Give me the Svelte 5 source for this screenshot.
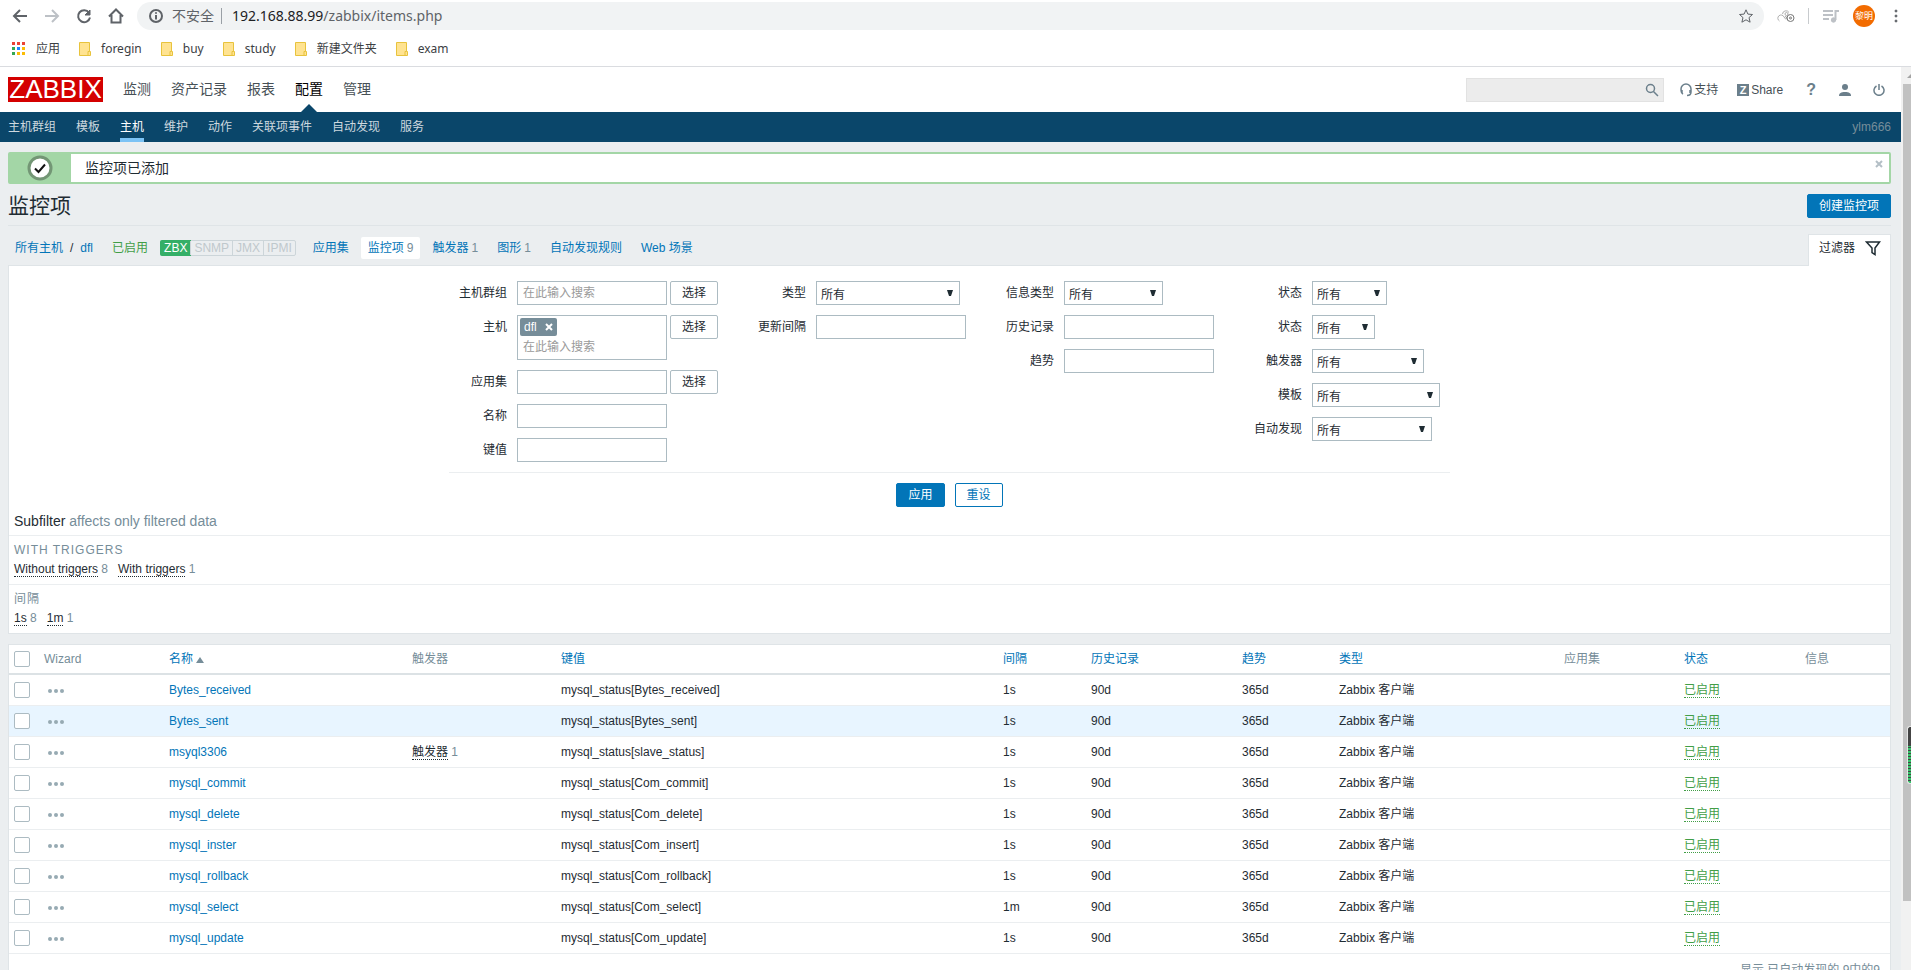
<script lang="ts">
  type Field = {
    id: string;
    label: string;
    kind: 'select' | 'text' | 'search' | 'picker' | 'chips';
    width?: number;
  };

  type Item = { name: string; key: string; interval: string; triggers?: number };

  const bookmarks = ['foregin', 'buy', 'study', '新建文件夹', 'exam'];
  const mainMenu = ['监测', '资产记录', '报表', '配置', '管理'];
  const subMenu = ['主机群组', '模板', '主机', '维护', '动作', '关联项事件', '自动发现', '服务'];
  const interfaces = ['ZBX', 'SNMP', 'JMX', 'IPMI'];

  const tabs = [
    { label: '应用集' },
    { label: '监控项', count: 9, selected: true },
    { label: '触发器', count: 1 },
    { label: '图形', count: 1 },
    { label: '自动发现规则' },
    { label: 'Web 场景' }
  ];

  const filterColumns: Field[][] = [
    [
      { id: 'groups', label: '主机群组', kind: 'search' },
      { id: 'hosts', label: '主机', kind: 'chips' },
      { id: 'application', label: '应用集', kind: 'picker' },
      { id: 'name', label: '名称', kind: 'text' },
      { id: 'key', label: '键值', kind: 'text' }
    ],
    [
      { id: 'type', label: '类型', kind: 'select', width: 144 },
      { id: 'delay', label: '更新间隔', kind: 'text' }
    ],
    [
      { id: 'value-type', label: '信息类型', kind: 'select', width: 99 },
      { id: 'history', label: '历史记录', kind: 'text' },
      { id: 'trends', label: '趋势', kind: 'text' }
    ],
    [
      { id: 'state', label: '状态', kind: 'select', width: 75 },
      { id: 'status', label: '状态', kind: 'select', width: 63 },
      { id: 'with-triggers', label: '触发器', kind: 'select', width: 112 },
      { id: 'templated', label: '模板', kind: 'select', width: 128 },
      { id: 'discovery', label: '自动发现', kind: 'select', width: 120 }
    ]
  ];

  const subfilters = [
    {
      title: 'WITH TRIGGERS',
      options: [
        { label: 'Without triggers', count: 8 },
        { label: 'With triggers', count: 1 }
      ]
    },
    {
      title: '间隔',
      options: [
        { label: '1s', count: 8 },
        { label: '1m', count: 1 }
      ]
    }
  ];

  const columns = [
    { label: 'Wizard', width: 125 },
    { label: '名称', width: 243, sortable: true, sorted: true },
    { label: '触发器', width: 149 },
    { label: '键值', width: 442, sortable: true },
    { label: '间隔', width: 88, sortable: true },
    { label: '历史记录', width: 151, sortable: true },
    { label: '趋势', width: 97, sortable: true },
    { label: '类型', width: 225, sortable: true },
    { label: '应用集', width: 120 },
    { label: '状态', width: 121, sortable: true },
    { label: '信息', width: 90 }
  ];

  const items: Item[] = [
    { name: 'Bytes_received', key: 'mysql_status[Bytes_received]', interval: '1s' },
    { name: 'Bytes_sent', key: 'mysql_status[Bytes_sent]', interval: '1s' },
    { name: 'msyql3306', key: 'mysql_status[slave_status]', interval: '1s', triggers: 1 },
    { name: 'mysql_commit', key: 'mysql_status[Com_commit]', interval: '1s' },
    { name: 'mysql_delete', key: 'mysql_status[Com_delete]', interval: '1s' },
    { name: 'mysql_inster', key: 'mysql_status[Com_insert]', interval: '1s' },
    { name: 'mysql_rollback', key: 'mysql_status[Com_rollback]', interval: '1s' },
    { name: 'mysql_select', key: 'mysql_status[Com_select]', interval: '1m' },
    { name: 'mysql_update', key: 'mysql_status[Com_update]', interval: '1s' }
  ];

  let hovered = $state('Bytes_sent');
  let checked = $state<string[]>([]);
  let hostChips = $state(['dfl']);
  let showMessage = $state(true);

  function toggleAll(e: Event) {
    const on = (e.currentTarget as HTMLInputElement).checked;
    checked = on ? items.map((i) => i.name) : [];
  }
</script>

<div class="window">
  <div class="toolbar">
    <div class="tools">
      <button type="button" class="tool" aria-label="Back">
        <svg width="16" height="16" viewBox="0 0 16 16"><path d="M15 8H2M8 2 2 8l6 6" /></svg>
      </button>
      <button type="button" class="tool faded" aria-label="Forward">
        <svg width="16" height="16" viewBox="0 0 16 16"><path d="M1 8h13M8 2l6 6-6 6" /></svg>
      </button>
      <button type="button" class="tool" aria-label="Reload">
        <svg width="16" height="16" viewBox="0 0 16 16">
          <path d="M13 4.6A6 6 0 1 0 14 9.5" /><path class="solid" d="M14 2v5H9z" />
        </svg>
      </button>
      <button type="button" class="tool" aria-label="Home">
        <svg width="16" height="16" viewBox="0 0 16 16"><path d="M1 8.5 8 1.5l7 7M3.5 7v7.5h9V7" /></svg>
      </button>
    </div>
    <div class="address">
      <svg class="info" width="14" height="14" viewBox="0 0 14 14">
        <circle cx="7" cy="7" r="6" /><path d="M7 6v4.500M7 3.200v1.600" />
      </svg>
      <span class="insecure">不安全</span>
      <span class="url"><b>192.168.88.99</b>/zabbix/items.php</span>
      <button type="button" class="tool star" aria-label="Bookmark">
        <svg width="16" height="16" viewBox="0 0 16 16">
          <path d="m8 1.800 1.900 4.300 4.600.400-3.500 3.100 1.100 4.600L8 11.800l-4.100 2.400L5 9.600 1.500 6.500l4.600-.400z" />
        </svg>
      </button>
    </div>
    <button type="button" class="tool cloud" aria-label="Extension">
      <svg width="18" height="14" viewBox="0 0 18 14">
        <path d="M5.500 5A3.500 3.500 0 0 1 12 3.500M2.500 12A3.200 3.200 0 1 1 7 8l2 2.500" stroke="#b0b0b0" />
        <circle cx="9.500" cy="5" r="1.500" stroke="#b0b0b0" />
        <path d="m8.500 7 2.500 4.500" stroke="#999" />
        <circle cx="13.500" cy="9" r="3.500" stroke="#777" /><circle cx="13.500" cy="9" r="1" stroke="#777" />
      </svg>
    </button>
    <span class="divider"></span>
    <button type="button" class="tool music" aria-label="Media">
      <svg width="18" height="16" viewBox="0 0 18 16">
        <path d="M1 3h10M1 7h10M1 11h6M13.500 12V3H17" /><circle class="solid" cx="11.500" cy="12" r="2.200" />
      </svg>
    </button>
    <span class="avatar">黎明</span>
    <button type="button" class="tool more" aria-label="Menu">
      <svg width="4" height="14" viewBox="0 0 4 14">
        <circle class="solid" cx="2" cy="2" r="1" /><circle class="solid" cx="2" cy="7" r="1" /><circle class="solid" cx="2" cy="12" r="1" />
      </svg>
    </button>
  </div>

  <nav class="bookmarks" aria-label="Bookmarks">
    <a href="#apps">
      <svg width="14" height="14" viewBox="0 0 14 14">
        <path fill="#ea4335" d="M0 0h3v3H0zM5 0h3v3H5zM10 0h3v3h-3z" />
        <path fill="#34a853" d="M0 5h3v3H0zM0 10h3v3H0z" />
        <path fill="#1a85ff" d="M5 5h3v3H5z" />
        <path fill="#fbbc05" d="M10 5h3v3h-3zM5 10h3v3H5zM10 10h3v3h-3z" />
      </svg>
      应用
    </a>
    {#each bookmarks as bookmark}
      <a href="#{bookmark}">
        <svg width="12" height="14" viewBox="0 0 12 14">
          <path fill="#ffe391" stroke="#e8c33c" d="M.5.5h10v9h1v4H.5z" /><path fill="none" stroke="#e8c33c" d="M9 13V9.500h1.500" />
        </svg>
        {bookmark}
      </a>
    {/each}
  </nav>

  <div class="viewport">
    <div class="page">
      <header>
        <a class="logo" href="#dashboard">ZABBIX</a>
        <nav class="main-menu">
          {#each mainMenu as entry}
            <a href="#{entry}" class:selected={entry === '配置'}>{entry}</a>
          {/each}
        </nav>
        <div class="search">
          <input type="text" aria-label="搜索" />
          <button type="button" aria-label="搜索">
            <svg width="14" height="14" viewBox="0 0 14 14"><circle cx="5.500" cy="5.500" r="4" /><path d="m8.500 8.500 4.500 4.500" /></svg>
          </button>
        </div>
        <nav class="top-icons">
          <a href="#support">
            <svg width="12" height="14" viewBox="0 0 12 14"><path d="M3 11C1 10 1 6 1 6a5 5 0 0 1 10 0v3c0 2-1 3.500-4 3.500M2 7v3M10 7v3" /></svg>
            支持
          </a>
          <a href="#share"><span class="z">Z</span>Share</a>
          <a class="help" href="#help">?</a>
          <a href="#profile" aria-label="Profile">
            <svg width="12" height="12" viewBox="0 0 12 12"><circle class="fill" cx="6" cy="3" r="3" /><path class="fill" d="M0 12c0-3 2-4 6-4s6 1 6 4z" /></svg>
          </a>
          <a href="#logout" aria-label="Sign out">
            <svg width="12" height="12" viewBox="0 0 12 12"><path d="M3.500 2a5 5 0 1 0 5 0M6 0v6" /></svg>
          </a>
        </nav>
      </header>

      <nav class="sub-menu">
        {#each subMenu as entry}
          <a href="#{entry}" class:selected={entry === '主机'}>{entry}</a>
        {/each}
        <span class="user">ylm666</span>
      </nav>

      <main>
        {#if showMessage}
          <div class="message" role="status">
            <div class="message-icon">
              <svg width="26" height="26" viewBox="0 0 26 26"><circle cx="13" cy="13" r="11" /><path d="m8 13.500 3.500 3.500L18 9.500" /></svg>
            </div>
            <span>监控项已添加</span>
            <button type="button" aria-label="Close" onclick={() => (showMessage = false)}>
              <svg width="8" height="8" viewBox="0 0 8 8"><path d="m1 1 6 6M7 1 1 7" /></svg>
            </button>
          </div>
        {/if}

        <div class="title">
          <h1>监控项</h1>
          <button type="button" class="primary">创建监控项</button>
        </div>

        <div class="object-row">
          <div class="crumbs">
            <a href="#hosts">所有主机</a><span>/</span><a href="#dfl">dfl</a>
          </div>
          <span class="enabled">已启用</span>
          <div class="interfaces">
            {#each interfaces as iface}
              <span class:on={iface === 'ZBX'}>{iface}</span>
            {/each}
          </div>
          <nav class="tabs">
            {#each tabs as tab}
              <span class="tab" class:selected={tab.selected}>
                <a href="#{tab.label}">{tab.label}</a>{#if tab.count}<sub>{tab.count}</sub>{/if}
              </span>
            {/each}
          </nav>
          <button type="button" class="filter-tab">
            过滤器
            <svg width="16" height="16" viewBox="0 0 16 16"><path d="M1.500 2h13L10 8v6.500l-3-2V8z" /></svg>
          </button>
        </div>

        <section class="filter">
          <form onsubmit={(e) => e.preventDefault()}>
            <div class="fields">
              {#each filterColumns as column}
                <div class="column">
                  {#each column as field}
                    <div class="field">
                      <label for={field.id}>{field.label}</label>
                      {#if field.kind === 'select'}
                        <select id={field.id} style="width: {field.width}px">
                          <option>所有</option>
                        </select>
                      {:else if field.kind === 'chips'}
                        <div class="multi">
                          {#each hostChips as chip}
                            <span class="chip">
                              {chip}
                              <button type="button" aria-label="Remove {chip}" onclick={() => (hostChips = [])}>
                                <svg width="8" height="8" viewBox="0 0 8 8"><path d="m1 1 6 6M7 1 1 7" /></svg>
                              </button>
                            </span>
                          {/each}
                          <input id={field.id} type="text" placeholder="在此输入搜索" />
                        </div>
                      {:else}
                        <input id={field.id} type="text" placeholder={field.kind === 'search' ? '在此输入搜索' : ''} />
                      {/if}
                      {#if ['search', 'chips', 'picker'].includes(field.kind)}
                        <button type="button" class="pick">选择</button>
                      {/if}
                    </div>
                  {/each}
                </div>
              {/each}
            </div>
            <div class="actions">
              <button type="submit" class="primary">应用</button>
              <button type="reset" class="secondary">重设</button>
            </div>
          </form>

          <h4>Subfilter <span>affects only filtered data</span></h4>
          {#each subfilters as group}
            <div class="subfilter">
              <h3>{group.title}</h3>
              <div class="options">
                {#each group.options as option}
                  <span><button type="button" class="dotted">{option.label}</button> {option.count}</span>
                {/each}
              </div>
            </div>
          {/each}
        </section>

        <section class="list">
          <table>
            <colgroup>
              <col style="width: 30px" />
              {#each columns as column}
                <col style="width: {column.width}px" />
              {/each}
            </colgroup>
            <thead>
              <tr>
                <th><input type="checkbox" aria-label="Select all" onchange={toggleAll} /></th>
                {#each columns as column}
                  <th>
                    {#if column.sortable}
                      <a href="#sort">{column.label}{#if column.sorted}<i class="asc"></i>{/if}</a>
                    {:else}
                      {column.label}
                    {/if}
                  </th>
                {/each}
              </tr>
            </thead>
            <tbody>
              {#each items as item (item.name)}
                <tr class:hovered={hovered === item.name} onmouseenter={() => (hovered = item.name)}>
                  <td><input type="checkbox" aria-label={item.name} value={item.name} bind:group={checked} /></td>
                  <td>
                    <button type="button" class="wizard" aria-label="Wizard">
                      <svg width="18" height="4" viewBox="0 0 18 4"><circle cx="3" cy="2" r="2" /><circle cx="9" cy="2" r="2" /><circle cx="15" cy="2" r="2" /></svg>
                    </button>
                  </td>
                  <td><a href="#{item.name}">{item.name}</a></td>
                  <td class="count">
                    {#if item.triggers}<button type="button" class="dotted">触发器</button> {item.triggers}{/if}
                  </td>
                  <td>{item.key}</td>
                  <td>{item.interval}</td>
                  <td>90d</td>
                  <td>365d</td>
                  <td>Zabbix 客户端</td>
                  <td></td>
                  <td><button type="button" class="dotted green">已启用</button></td>
                  <td></td>
                </tr>
              {/each}
            </tbody>
          </table>
          <p class="summary">显示 已自动发现的 9中的9</p>
        </section>
      </main>
    </div>

    <div class="scrollbar">
      <span class="scroll-up"></span>
      <span class="thumb"></span>
      <span class="meter"></span>
    </div>
  </div>
</div>

<style>
  :global(body) {
    margin: 0;
  }

  .window {
    display: flex;
    flex-direction: column;
    height: 100vh;
    overflow: hidden;
    background: #fff;
    color: #1f2c33;
    font: 12px/18px 'Liberation Sans', 'Noto Sans CJK SC', sans-serif;
  }

  .window * {
    box-sizing: border-box;
  }

  svg {
    display: block;
    flex: none;
    fill: none;
    stroke: currentColor;
  }

  a {
    color: #0275b8;
    text-decoration: none;
  }

  button {
    font: inherit;
    cursor: pointer;
  }

  /* Browser chrome */
  .toolbar {
    display: flex;
    flex: none;
    align-items: center;
    gap: 13px;
    height: 32px;
    padding: 0 13px 0 12px;
  }

  .tools {
    display: flex;
    gap: 16px;
  }

  .tool {
    padding: 0;
    border: 0;
    background: none;
    color: #5f6368;
  }

  .tool svg {
    stroke-width: 2;
  }

  .tool .solid {
    fill: currentColor;
    stroke-width: 1;
  }

  .faded,
  .music {
    color: #bdc1c6;
  }

  .address {
    display: flex;
    flex: 1;
    align-items: center;
    height: 28px;
    padding: 0 10px 0 12px;
    border-radius: 14px;
    background: #f1f3f4;
    color: #5f6368;
    font-family: 'Noto Sans', 'Noto Sans CJK SC', sans-serif;
    font-size: 14px;
  }

  .info {
    margin-right: 9px;
    stroke-width: 2;
  }

  .insecure {
    padding-right: 7px;
    border-right: 1px solid #9aa0a6;
    line-height: 16px;
  }

  .url {
    flex: 1;
    padding-left: 10px;
  }

  .url b {
    color: #202124;
    font-weight: 400;
  }

  .star svg,
  .cloud svg {
    stroke-width: 1;
  }

  .divider {
    width: 1px;
    height: 16px;
    background: #c8cbce;
  }

  .avatar {
    width: 22px;
    border-radius: 11px;
    background: #f26b00;
    color: #fff;
    font-size: 9px;
    line-height: 22px;
    text-align: center;
  }

  .more {
    margin-left: 6px;
  }

  .bookmarks {
    display: flex;
    flex: none;
    gap: 19px;
    height: 35px;
    padding: 8px 12px;
    border-bottom: 1px solid #dadce0;
    font-family: 'Noto Sans', 'Noto Sans CJK SC', sans-serif;
  }

  .bookmarks a {
    display: flex;
    align-items: center;
    gap: 10px;
    color: #3c4043;
  }

  .bookmarks svg {
    stroke: none;
  }

  .viewport {
    display: flex;
    flex: 1;
    min-height: 0;
  }

  .page {
    flex: 1;
    overflow: hidden;
    background: #ebeef0;
  }

  /* Header */
  header {
    display: flex;
    align-items: center;
    height: 45px;
    padding: 0 16px 0 8px;
    background: #fff;
  }

  .logo {
    width: 95px;
    margin-right: 20px;
    background: #d40000;
    color: #fff;
    font-size: 26px;
    line-height: 25px;
    text-align: center;
  }

  .main-menu {
    display: flex;
    flex: 1;
    align-self: stretch;
    gap: 20px;
    font-size: 14px;
    line-height: 44px;
  }

  .main-menu a {
    position: relative;
    color: #475056;
  }

  .main-menu .selected {
    color: #000;
  }

  .main-menu .selected::after {
    content: '';
    position: absolute;
    bottom: 0;
    left: 50%;
    margin-left: -8px;
    border: 8px solid transparent;
    border-top: 0;
    border-bottom-color: #0a466a;
  }

  .search {
    display: flex;
    width: 198px;
    height: 24px;
    margin-right: 16px;
    border: 1px solid #e2e2e2;
    background: #ececec;
  }

  .search input {
    flex: 1;
    min-width: 0;
    border: 0;
    background: none;
  }

  .search button {
    padding: 0 4px;
    border: 0;
    background: none;
    color: #6b7f8b;
  }

  .search svg,
  .top-icons svg {
    stroke-width: 1.5;
  }

  .top-icons {
    display: flex;
    align-items: center;
    gap: 22px;
    color: #6b7f8b;
  }

  .top-icons a {
    display: flex;
    align-items: center;
    gap: 2px;
    color: #6b7f8b;
  }

  .top-icons a:nth-child(-n + 2) {
    color: #475056;
  }

  .top-icons a:first-child svg {
    color: #6b7f8b;
  }

  .top-icons a:first-child {
    margin-right: -3px;
  }

  .top-icons .fill {
    fill: currentColor;
    stroke: none;
  }

  .top-icons .help {
    padding: 0 1px;
    font-size: 16px;
    font-weight: 700;
  }

  .z {
    width: 12px;
    background: #6b7f8b;
    color: #fff;
    font-size: 11px;
    font-weight: 700;
    line-height: 12px;
    text-align: center;
  }

  .sub-menu {
    display: flex;
    gap: 20px;
    height: 30px;
    padding: 0 10px 0 8px;
    background: #0a466a;
    line-height: 30px;
  }

  .sub-menu a {
    height: 30px;
    color: #cdd8df;
  }

  .sub-menu .selected {
    border-bottom: 4px solid #7cc3f5;
    color: #fff;
  }

  .user {
    margin-left: auto;
    color: #768d99;
  }

  main {
    padding: 10px 10px 0 8px;
  }

  /* Page heading */
  .message {
    display: flex;
    height: 32px;
    border: 2px solid #a3d6a6;
    border-radius: 2px;
    background: #fff;
    font-size: 14px;
    line-height: 28px;
  }

  .message-icon {
    display: flex;
    align-items: center;
    justify-content: center;
    width: 61px;
    margin-right: 14px;
    padding-right: 2px;
    background: #a3d6a6;
  }

  .message-icon svg {
    stroke-width: 2;
    color: #111;
  }

  .message-icon circle {
    fill: #fff;
    stroke: #739675;
    stroke-width: 3;
  }

  .message button {
    align-self: flex-start;
    margin-left: auto;
    padding: 6px;
    border: 0;
    background: none;
    color: #b4bfc6;
  }

  .message button svg,
  .chip svg {
    stroke-width: 2;
  }

  .title {
    display: flex;
    align-items: center;
    justify-content: space-between;
    height: 42px;
    padding-top: 3px;
    border-bottom: 1px solid #dfe4e7;
  }

  h1 {
    margin: 0;
    font-size: 21px;
    font-weight: 400;
    line-height: 30px;
  }

  .primary,
  .secondary,
  .pick {
    height: 24px;
    padding: 0 11px;
    border: 1px solid #0275b8;
    border-radius: 2px;
    background: #0275b8;
    color: #fff;
    line-height: 22px;
  }

  .secondary {
    background: #fff;
    color: #0275b8;
  }

  .pick {
    margin-left: 3px;
    border-color: #acbbc2;
    background: #fff;
    color: #1f2c33;
  }

  .object-row {
    display: flex;
    align-items: center;
    height: 39px;
    padding: 5px 0 0 7px;
  }

  .crumbs {
    display: flex;
    gap: 7px;
  }

  .enabled {
    margin: 0 12px 0 19px;
    color: #429e47;
  }

  .interfaces {
    display: flex;
    border: 1px solid #ccd5d9;
    border-radius: 2px;
    line-height: 14px;
  }

  .interfaces span {
    padding: 0 3px;
    color: #bfc8cc;
  }

  .interfaces span + span {
    border-left: 1px solid #ccd5d9;
  }

  .interfaces .on {
    margin: -1px;
    padding: 1px 4px;
    border-radius: 2px 0 0 2px;
    background: #34af67;
    color: #fff;
  }

  .tabs {
    display: flex;
    gap: 5px;
    margin-left: 10px;
  }

  .tab {
    padding: 1px 7px;
    border-radius: 2px;
    line-height: 20px;
  }

  .tab.selected {
    background: #fff;
  }

  .tab sub {
    margin-left: 3px;
    color: #768d99;
    font-size: 12px;
    line-height: 18px;
    vertical-align: baseline;
  }

  .filter-tab {
    position: relative;
    display: flex;
    align-items: center;
    align-self: flex-end;
    gap: 10px;
    height: 32px;
    margin: 0 0 -1px auto;
    padding: 0 9px 6px 10px;
    border: 1px solid #dfe4e7;
    border-bottom: 0;
    background: #fff;
    color: #1f2c33;
  }

  .filter-tab svg {
    stroke-width: 1.5;
  }

  /* Filter */
  .filter,
  .list {
    border: 1px solid #dfe4e7;
    background: #fff;
  }

  form {
    width: 1001px;
    max-width: 100%;
    margin: 0 auto;
    padding-top: 15px;
  }

  .fields {
    display: flex;
    height: 192px;
    border-bottom: 1px solid #ebeef0;
  }

  .column {
    display: flex;
    flex-direction: column;
    gap: 10px;
  }

  .field {
    display: flex;
    align-items: flex-start;
  }

  label {
    width: 98px;
    padding-right: 10px;
    line-height: 24px;
    text-align: right;
  }

  .column:first-child label {
    width: 68px;
  }

  .field > input,
  .multi {
    width: 150px;
    height: 24px;
    padding: 0 5px;
    border: 1px solid #acbbc2;
    background: #fff;
    font: inherit;
  }

  .multi {
    height: 45px;
    padding: 2px;
  }

  .multi input {
    width: 100%;
    height: 22px;
    padding: 0 3px;
    border: 0;
    font: inherit;
  }

  input::placeholder {
    color: #9a9a9a;
  }

  .chip {
    display: flex;
    align-items: center;
    gap: 8px;
    width: max-content;
    height: 18px;
    padding: 0 4px;
    border-radius: 2px;
    background: #768d99;
    color: #fff;
  }

  .chip button {
    padding: 0;
    border: 0;
    background: none;
    color: #fff;
  }

  select {
    height: 24px;
    padding: 3px 4px 0;
    border: 1px solid #acbbc2;
    border-radius: 0;
    appearance: none;
    background: #fff url("data:image/svg+xml,%3Csvg xmlns='http://www.w3.org/2000/svg' width='6' height='6'%3E%3Cpath fill='%231f2c33' d='M0 0h6L4 6H2z'/%3E%3C/svg%3E") no-repeat right 6px top 8px;
    color: #1f2c33;
    font: inherit;
  }

  .actions {
    display: flex;
    justify-content: center;
    gap: 10px;
    padding: 10px 0 7px;
  }

  h3,
  h4 {
    margin: 0;
    font-weight: 400;
  }

  h4 {
    padding: 0 5px 7px;
    font-size: 14px;
    line-height: 14px;
  }

  h4 span,
  h3,
  .options,
  .count {
    color: #768d99;
  }

  .subfilter {
    padding: 5px 5px 6px;
    border-top: 1px solid #ebeef0;
  }

  h3 {
    font-size: 12px;
    letter-spacing: 1px;
    line-height: 19px;
  }

  .options {
    display: flex;
    gap: 10px;
    line-height: 18px;
  }

  .dotted {
    padding: 0;
    border: 0;
    border-bottom: 1px dotted #1f2c33;
    background: none;
    color: #1f2c33;
    line-height: 14px;
  }

  .green {
    border-color: #429e47;
    color: #429e47;
  }

  /* Item list */
  .list {
    margin-top: 10px;
  }

  table {
    width: 100%;
    table-layout: fixed;
    border-collapse: separate;
    border-spacing: 0;
  }

  th,
  td {
    height: 31px;
    padding: 0 5px;
    border-bottom: 1px solid #ebeef0;
    text-align: left;
    white-space: nowrap;
  }

  th {
    height: 30px;
    border-bottom: 2px solid #dce2e5;
    color: #768d99;
    font-weight: 400;
  }

  .hovered td {
    background: #e8f5ff;
  }

  input[type='checkbox'] {
    display: block;
    width: 16px;
    height: 16px;
    margin: 0;
    border: 1px solid #acbbc2;
    border-radius: 2px;
    appearance: none;
    background: #fff;
  }

  input[type='checkbox']:checked {
    background: #0275b8;
  }

  .asc {
    display: inline-block;
    margin-left: 3px;
    border: 4px solid transparent;
    border-top: 0;
    border-bottom: 6px solid #768d99;
  }

  .wizard {
    display: block;
    padding: 1px 3px 0;
    border: 0;
    background: none;
  }

  .wizard svg {
    fill: #97aab3;
    stroke: none;
  }

  .summary {
    margin: 0;
    padding: 7px 10px;
    color: #768d99;
    text-align: right;
  }

  /* Window scrollbar */
  .scrollbar {
    position: relative;
    display: flex;
    flex-direction: column;
    align-items: flex-end;
    width: 10px;
    background: #f1f1f1;
  }

  .scroll-up {
    margin: 7px 0 6px;
    border: 4px solid transparent;
    border-top: 0;
    border-right-width: 0;
    border-bottom-color: #a3a3a3;
  }

  .thumb {
    width: 8px;
    height: 90.5%;
    background: #c1c1c1;
  }

  .meter {
    position: absolute;
    top: 73%;
    right: 0;
    width: 4px;
    height: 58px;
    border: 1px solid #e4e4e4;
    border-right: 0;
    border-radius: 3px 0 0 3px;
    background:
      linear-gradient(#444 19px, transparent 19px),
      repeating-linear-gradient(#35c46a 0 2px, #444 2px 3px);
  }
</style>
